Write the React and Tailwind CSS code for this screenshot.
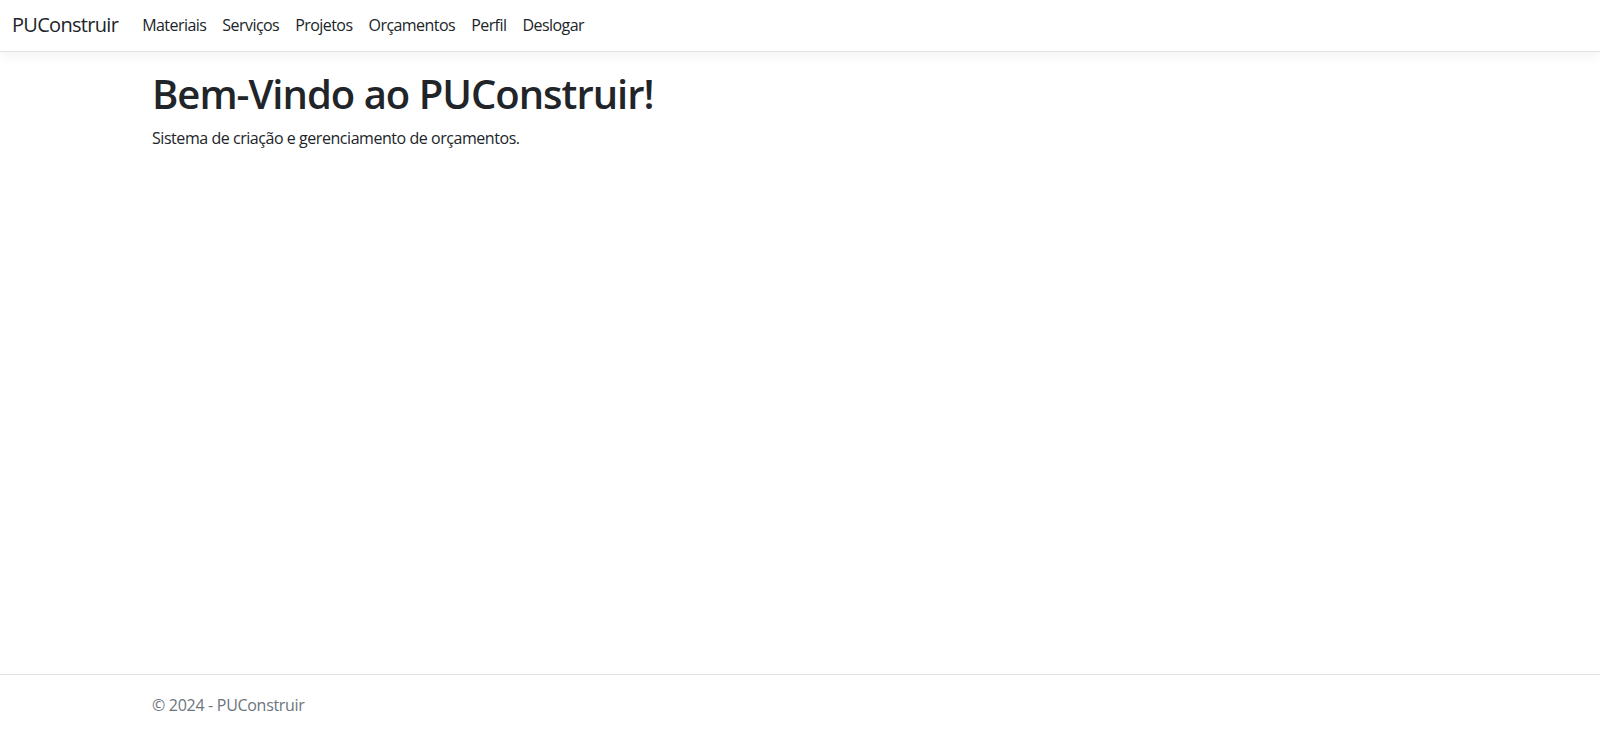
export default function App() {
  const font = { fontFamily: '"Segoe UI", "Open Sans", "Liberation Sans", sans-serif' };
  return (
    <div className="flex h-screen flex-col bg-white text-[#212529]" style={font}>
      <header className="h-[52px] shrink-0 border-b border-[#dee2e6] bg-white shadow-[0_4px_12px_rgba(0,0,0,0.05)]">
        <nav className="flex h-full items-center px-3 pb-[2px]">
          <a className="mr-4 text-[20px] leading-[30px] tracking-[-0.7px] text-[#212529]">PUConstruir</a>
          <ul className="flex items-center">
            {["Materiais", "Serviços", "Projetos", "Orçamentos", "Perfil", "Deslogar"].map((l) => (
              <li key={l}>
                <a className="block px-2 text-[16px] leading-6 tracking-[-0.55px] text-[#212529]">{l}</a>
              </li>
            ))}
          </ul>
        </nav>
      </header>
      <main className="flex-1">
        <div className="mx-auto w-full max-w-[1320px] px-3 pt-[18px]">
          <h1 className="mb-[8px] text-[40px] font-semibold leading-[48px] tracking-[-1px] text-[#212529]">Bem-Vindo ao PUConstruir!</h1>
          <p className="text-[16px] leading-6 tracking-[-0.45px]">Sistema de criação e gerenciamento de orçamentos.</p>
        </div>
      </main>
      <footer className="h-[61px] shrink-0 border-t border-[#dee2e6]">
        <div className="mx-auto w-full max-w-[1320px] px-3 text-[16px] leading-[60px] tracking-[-0.3px] text-[#6c757d]">
          © 2024 - PUConstruir
        </div>
      </footer>
    </div>
  );
}
